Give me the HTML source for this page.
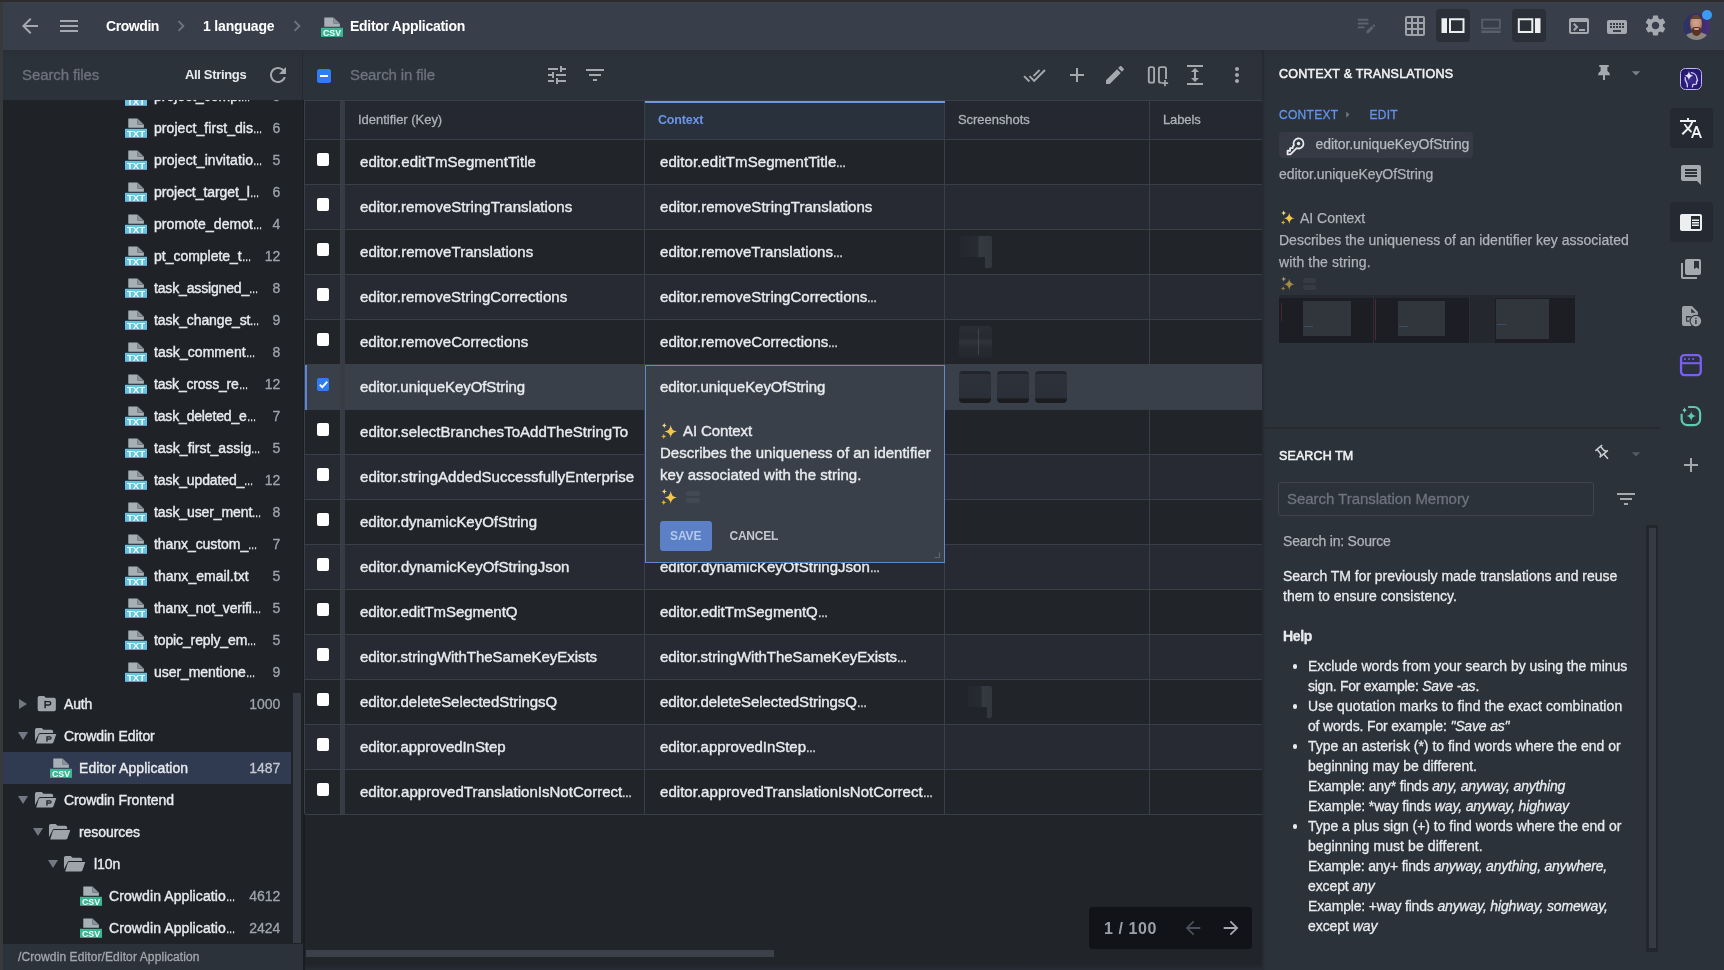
<!DOCTYPE html>
<html lang="en"><head><meta charset="utf-8"><title>Editor Application - Crowdin</title>
<style>
html,body{margin:0;padding:0}
body{width:1724px;height:970px;overflow:hidden;position:relative;background:#2d2b2b;font-family:"Liberation Sans",sans-serif;color:#e6e8eb;font-size:15px}
#root{position:absolute;left:0;top:0;width:1724px;height:970px;overflow:hidden;will-change:transform}
.ab{position:absolute;display:block}
.t,.cell,.sbt,.sbn,.help{position:absolute;white-space:nowrap;line-height:20px}
.b{font-weight:bold}
.el{display:inline-block;width:.66em;transform:scaleX(.66);transform-origin:0 50%;letter-spacing:0}
#leftedge{left:0;top:2px;width:3px;height:968px;background:#37393a}
#topbar{left:3px;top:2px;width:1721px;height:48px;background:#393f4a}
#bar2{left:3px;top:50px;width:1721px;height:50px;background:linear-gradient(180deg,#292e36 0,#2c323a 8px,#2c323a 100%)}
#sidebar{left:3px;top:100px;width:299.8px;height:844px;background:#1f2227;overflow:hidden}
#sbfoot{left:3px;top:944px;width:299.8px;height:26px;background:#2c323a}
#gap{left:302.8px;top:100px;width:2.2px;height:870px;background:#1a1c20}
#main{left:305px;top:100px;width:957px;height:870px;background:#212429;overflow:hidden}
#rpanel{left:1262px;top:100px;width:462px;height:870px;background:#2c323a}
.row{position:absolute;left:0;width:957px;height:45px}
.hl{position:absolute;left:0;width:957px;height:1px;background:#3a3e47}
.vl{position:absolute;top:0;width:1px;height:714px;background:#3a3e47}
.cb{position:absolute;left:12.3px;width:12px;height:12.6px;background:#fff;border-radius:2px;margin-top:.2px}
.cell{font-size:15px;color:#e8eaed;-webkit-text-stroke:.4px}
.sbt{font-size:14px;color:#e8eaed;-webkit-text-stroke:.4px}
.sbn{font-size:14px;color:#9ea3ab;text-align:right;-webkit-text-stroke:.3px}
.help{font-size:14px;color:#e8eaed;-webkit-text-stroke:.3px}
.g{color:#aeb3ba;font-size:14px;-webkit-text-stroke:.25px}
i{font-style:italic}
</style></head><body><div id="root">

<div class="ab" id="leftedge"></div>
<div class="ab" id="topbar"></div>
<div class="ab" id="bar2"></div>
<div class="ab" style="left:302px;top:50px;width:1px;height:50px;background:#252930"></div>
<svg class="ab" style="left:18px;top:14px;" width="24" height="24" viewBox="0 0 24 24" fill="#a4a9b0"><path d="M20 11H7.83l5.59-5.59L12 4l-8 8 8 8 1.41-1.41L7.83 13H20v-2z"/></svg>
<svg class="ab" style="left:57px;top:14px;" width="24" height="24" viewBox="0 0 24 24" fill="#a4a9b0"><path d="M3 18h18v-2H3v2zm0-5h18v-2H3v2zm0-7v2h18V6H3z"/></svg>
<div class="t b" id="t1" style="left:106px;top:16px;letter-spacing:-0.429px;font-size:14px;color:#fff">Crowdin</div>
<svg class="ab" style="left:170px;top:15px;" width="22" height="22" viewBox="0 0 24 24" fill="#6f7682"><path d="M10 6L8.59 7.41 13.17 12l-4.58 4.59L10 18l6-6z"/></svg>
<div class="t b" id="t2" style="left:203px;top:16px;letter-spacing:-0.164px;font-size:14px;color:#fff">1 language</div>
<svg class="ab" style="left:286px;top:15px;" width="22" height="22" viewBox="0 0 24 24" fill="#6f7682"><path d="M10 6L8.59 7.41 13.17 12l-4.58 4.59L10 18l6-6z"/></svg>
<svg class="ab" style="left:321px;top:17px" width="22" height="20" viewBox="0 0 22 20"><path d="M3.3 .4H12.6V6.5H18.9V9.7H3.3z" fill="#a8b0b7"/><path d="M12.6 .4L18.9 6.5H12.6z" fill="#8a9299"/><rect x="0" y="10.8" width="22" height="9" fill="#3db793"/><text x="11" y="18.7" text-anchor="middle" font-family="Liberation Sans, sans-serif" font-size="8.5" font-weight="bold" fill="#f4fbfd" textLength="18" lengthAdjust="spacingAndGlyphs">CSV</text></svg>
<div class="t b" id="t3" style="left:350px;top:16px;letter-spacing:-0.28px;font-size:14px;color:#fff">Editor Application</div>
<svg class="ab" style="left:1354.5px;top:13.3px;" width="23" height="23" viewBox="0 0 24 24" fill="#5d636e"><path d="M3 10h11v2H3v-2zm0-2h11V6H3v2zm0 8h7v-2H3v2zm15.01-3.13l.71-.71c.39-.39 1.02-.39 1.41 0l.71.71c.39.39.39 1.02 0 1.41l-.71.71-2.12-2.12zm-.71.71l-5.3 5.3V21h2.12l5.3-5.3-2.12-2.12z"/></svg>
<svg class="ab" style="left:1403px;top:14px;" width="24" height="24" viewBox="0 0 24 24" fill="#9da2a9"><path d="M20 2H4c-1.1 0-2 .9-2 2v16c0 1.1.9 2 2 2h16c1.1 0 2-.9 2-2V4c0-1.1-.9-2-2-2zM8 20H4v-4h4v4zm0-6H4v-4h4v4zm0-6H4V4h4v4zm6 12h-4v-4h4v4zm0-6h-4v-4h4v4zm0-6h-4V4h4v4zm6 12h-4v-4h4v4zm0-6h-4v-4h4v4zm0-6h-4V4h4v4z"/></svg>
<div class="ab" style="left:1436px;top:9px;width:34px;height:33px;border-radius:4px;background:#2a2f38"></div>
<svg class="ab" style="left:1441px;top:18px" width="24" height="16" viewBox="0 0 24 16" fill="#eceef0"><path d="M.5 .3h5.5v14.8H.5zM8 .3h15.5v14.8H8zM10 2.3v10.8h11.5V2.3z" fill-rule="evenodd"/></svg>
<svg class="ab" style="left:1481px;top:18px" width="20" height="16" viewBox="0 0 20 16" fill="#5a606b"><path d="M.3 .7h19.4v10.5H.3zM2 2.4v7.1h16V2.4zM.3 12.4h19.4v2.7H.3z" fill-rule="evenodd"/></svg>
<div class="ab" style="left:1512px;top:9px;width:34px;height:33px;border-radius:4px;background:#2a2f38"></div>
<svg class="ab" style="left:1517px;top:18px" width="24" height="16" viewBox="0 0 24 16" fill="#eceef0"><path d="M18 .3h5.5v14.8H18zM.8 .3h15.5v14.8H.8zM2.8 2.3v10.8h11.5V2.3z" fill-rule="evenodd"/></svg>
<svg class="ab" style="left:1567px;top:14.3px;" width="24" height="24" viewBox="0 0 24 24" fill="#a4a9b0"><path d="M20 4H4c-1.11 0-2 .9-2 2v12c0 1.1.89 2 2 2h16c1.1 0 2-.9 2-2V6c0-1.1-.89-2-2-2zm0 14H4V8h16v10zm-2-1h-6v-2h6v2zM7.5 17l-1.41-1.41L8.67 13l-2.59-2.59L7.5 9l4 4-4 4z"/></svg>
<svg class="ab" style="left:1605px;top:14.5px;" width="24" height="24" viewBox="0 0 24 24" fill="#a4a9b0"><path d="M20 5H4c-1.1 0-1.99.9-1.99 2L2 17c0 1.1.9 2 2 2h16c1.1 0 2-.9 2-2V7c0-1.1-.9-2-2-2zm-9 3h2v2h-2V8zm0 3h2v2h-2v-2zM8 8h2v2H8V8zm0 3h2v2H8v-2zm-1 2H5v-2h2v2zm0-3H5V8h2v2zm9 7H8v-2h8v2zm0-4h-2v-2h2v2zm0-3h-2V8h2v2zm3 3h-2v-2h2v2zm0-3h-2V8h2v2z"/></svg>
<svg class="ab" style="left:1642.5px;top:13.3px;" width="25" height="25" viewBox="0 0 24 24" fill="#a4a9b0"><path d="M19.14 12.94c.04-.3.06-.61.06-.94 0-.32-.02-.64-.07-.94l2.03-1.58c.18-.14.23-.41.12-.61l-1.92-3.32c-.12-.22-.37-.29-.59-.22l-2.39.96c-.5-.38-1.03-.7-1.62-.94l-.36-2.54c-.04-.24-.24-.41-.48-.41h-3.84c-.24 0-.43.17-.47.41l-.36 2.54c-.59.24-1.13.57-1.62.94l-2.39-.96c-.22-.08-.47 0-.59.22L2.74 8.87c-.12.21-.08.47.12.61l2.03 1.58c-.05.3-.09.63-.09.94s.02.64.07.94l-2.03 1.58c-.18.14-.23.41-.12.61l1.92 3.32c.12.22.37.29.59.22l2.39-.96c.5.38 1.03.7 1.62.94l.36 2.54c.05.24.24.41.48.41h3.84c.24 0 .44-.17.47-.41l.36-2.54c.59-.24 1.13-.56 1.62-.94l2.39.96c.22.08.47 0 .59-.22l1.92-3.32c.12-.22.07-.47-.12-.61l-2.01-1.58zM12 15.6c-1.98 0-3.6-1.62-3.6-3.6s1.62-3.6 3.6-3.6 3.6 1.62 3.6 3.6-1.62 3.6-3.6 3.6z"/></svg>
<div class="ab" style="left:1682.5px;top:12.5px;width:27.5px;height:27.5px;border-radius:50%;overflow:hidden;background:linear-gradient(90deg,#2c3462 0,#333068 50%,#4a2e7a 100%)"><div class="ab" style="left:1px;top:19.5px;width:25px;height:14px;border-radius:50% 50% 0 0;background:#8b877f"></div><div class="ab" style="left:7.8px;top:2.8px;width:11.8px;height:17px;border-radius:46%;background:radial-gradient(ellipse at 50% 45%,#d3a48d 0,#c4917a 50%,#8a5a45 80%,#5a3626 100%)"></div><div class="ab" style="left:8.8px;top:2.5px;width:10px;height:4px;border-radius:50% 50% 0 0;background:#4a3026;opacity:.8"></div><div class="ab" style="left:9.3px;top:14.2px;width:9px;height:9.5px;border-radius:35% 35% 50% 50%;background:#5a3222"></div><div class="ab" style="left:11.8px;top:15.3px;width:4.5px;height:2px;border-radius:1px;background:#c9a090"></div></div>
<div class="ab" style="left:1701.9px;top:9.7px;width:10.4px;height:10.4px;border-radius:50%;background:#3a9cf6"></div>
<div class="t" id="t4" style="left:22px;top:65px;letter-spacing:-0.098px;font-size:15px;color:#6d737e;-webkit-text-stroke:.3px">Search files</div>
<div class="t b" id="t5" style="left:185px;top:65px;letter-spacing:-0.338px;font-size:13px;color:#e8eaed">All Strings</div>
<svg class="ab" style="left:266px;top:63px;" width="24" height="24" viewBox="0 0 24 24" fill="#a4a9b0"><path d="M17.65 6.35C16.2 4.9 14.21 4 12 4c-4.42 0-7.99 3.58-7.99 8s3.57 8 7.99 8c3.73 0 6.84-2.55 7.73-6h-2.08c-.82 2.33-3.04 4-5.65 4-3.31 0-6-2.69-6-6s2.69-6 6-6c1.66 0 3.14.69 4.22 1.78L13 11h7V4l-2.35 2.35z"/></svg>
<div class="ab" style="left:317px;top:69px;width:13.5px;height:13.5px;border-radius:2.5px;background:#2f7cf6"></div><div class="ab" style="left:320px;top:74.5px;width:7.5px;height:2px;background:#fff"></div>
<div class="t" id="t6" style="left:350px;top:65px;letter-spacing:-0.123px;font-size:15px;color:#6d737e;-webkit-text-stroke:.3px">Search in file</div>
<svg class="ab" style="left:545px;top:63px;" width="24" height="24" viewBox="0 0 24 24" fill="#a4a9b0"><path d="M3 17v2h6v-2H3zM3 5v2h10V5H3zm10 16v-2h8v-2h-8v-2h-2v6h2zM7 9v2H3v2h4v2h2V9H7zm14 4v-2H11v2h10zm-6-4h2V7h4V5h-4V3h-2v6z"/></svg>
<svg class="ab" style="left:583px;top:63px;" width="24" height="24" viewBox="0 0 24 24" fill="#a4a9b0"><path d="M10 18h4v-2h-4v2zM3 6v2h18V6H3zm3 7h12v-2H6v2z"/></svg>
<svg class="ab" style="left:1023px;top:63.5px;" width="23" height="23" viewBox="0 0 24 24" fill="#a4a9b0"><path d="M18 7l-1.41-1.41-6.34 6.34 1.41 1.41L18 7zm4.24-1.41L11.66 16.17 7.48 12l-1.41 1.41L11.66 19l12-12-1.42-1.41zM.41 13.41L6 19l1.41-1.41L1.83 12 .41 13.41z"/></svg>
<svg class="ab" style="left:1065px;top:63px;" width="24" height="24" viewBox="0 0 24 24" fill="#a4a9b0"><path d="M19 13h-6v6h-2v-6H5v-2h6V5h2v6h6v2z"/></svg>
<svg class="ab" style="left:1103px;top:63px;" width="24" height="24" viewBox="0 0 24 24" fill="#a4a9b0"><path d="M3 17.25V21h3.75L17.81 9.94l-3.75-3.75L3 17.25zM20.71 7.04c.39-.39.39-1.02 0-1.41l-2.34-2.34c-.39-.39-1.02-.39-1.41 0l-1.83 1.83 3.75 3.75 1.83-1.83z"/></svg>
<svg class="ab" style="left:1145px;top:63px" width="26" height="26" viewBox="0 0 26 26" fill="none" stroke="#a4a9b0" stroke-width="1.9"><rect x="3.8" y="4.1" width="5.3" height="15.5" rx="1.6"/><path d="M21 16V5.7a1.6 1.6 0 0 0-1.6-1.6h-3.9a1.6 1.6 0 0 0-1.6 1.6V18a1.6 1.6 0 0 0 1.6 1.6h1.3"/><path d="M20 17v6.2M16.9 20.1h6.2" stroke-width="1.7"/></svg>
<svg class="ab" style="left:1183px;top:63px;" width="24" height="24" viewBox="0 0 24 24" fill="#a4a9b0"><path d="M4 20h16v2H4zM4 2h16v2H4zm9 7h3l-4-4-4 4h3v6H8l4 4 4-4h-3z"/></svg>
<svg class="ab" style="left:1225px;top:63px;" width="24" height="24" viewBox="0 0 24 24" fill="#a4a9b0"><path d="M12 8c1.1 0 2-.9 2-2s-.9-2-2-2-2 .9-2 2 .9 2 2 2zm0 2c-1.1 0-2 .9-2 2s.9 2 2 2 2-.9 2-2-.9-2-2-2zm0 6c-1.1 0-2 .9-2 2s.9 2 2 2 2-.9 2-2-.9-2-2-2z"/></svg>
<div class="ab" id="sidebar">
<svg class="ab" style="left:122px;top:-14px" width="22" height="20" viewBox="0 0 22 20"><path d="M3.3 .4H12.6V6.5H18.9V9.7H3.3z" fill="#a8b0b7"/><path d="M12.6 .4L18.9 6.5H12.6z" fill="#8a9299"/><rect x="0" y="10.8" width="22" height="9" fill="#6ac2e2"/><text x="11" y="18.7" text-anchor="middle" font-family="Liberation Sans, sans-serif" font-size="8.5" font-weight="bold" fill="#f4fbfd" textLength="18" lengthAdjust="spacingAndGlyphs">TXT</text></svg>
<div class="sbt" id="t7" style="left:151px;top:-14px;">project_compl<span class="el">…</span></div>
<div class="sbn" id="t8" style="right:22.5px;top:-14px;">5</div>
<svg class="ab" style="left:122px;top:18px" width="22" height="20" viewBox="0 0 22 20"><path d="M3.3 .4H12.6V6.5H18.9V9.7H3.3z" fill="#a8b0b7"/><path d="M12.6 .4L18.9 6.5H12.6z" fill="#8a9299"/><rect x="0" y="10.8" width="22" height="9" fill="#6ac2e2"/><text x="11" y="18.7" text-anchor="middle" font-family="Liberation Sans, sans-serif" font-size="8.5" font-weight="bold" fill="#f4fbfd" textLength="18" lengthAdjust="spacingAndGlyphs">TXT</text></svg>
<div class="sbt" id="t9" style="left:151px;top:18px;letter-spacing:0.062px;">project_first_dis<span class="el">…</span></div>
<div class="sbn" id="t10" style="right:22.5px;top:18px;">6</div>
<svg class="ab" style="left:122px;top:50px" width="22" height="20" viewBox="0 0 22 20"><path d="M3.3 .4H12.6V6.5H18.9V9.7H3.3z" fill="#a8b0b7"/><path d="M12.6 .4L18.9 6.5H12.6z" fill="#8a9299"/><rect x="0" y="10.8" width="22" height="9" fill="#6ac2e2"/><text x="11" y="18.7" text-anchor="middle" font-family="Liberation Sans, sans-serif" font-size="8.5" font-weight="bold" fill="#f4fbfd" textLength="18" lengthAdjust="spacingAndGlyphs">TXT</text></svg>
<div class="sbt" id="t11" style="left:151px;top:50px;letter-spacing:0.105px;">project_invitatio<span class="el">…</span></div>
<div class="sbn" id="t12" style="right:22.5px;top:50px;">5</div>
<svg class="ab" style="left:122px;top:82px" width="22" height="20" viewBox="0 0 22 20"><path d="M3.3 .4H12.6V6.5H18.9V9.7H3.3z" fill="#a8b0b7"/><path d="M12.6 .4L18.9 6.5H12.6z" fill="#8a9299"/><rect x="0" y="10.8" width="22" height="9" fill="#6ac2e2"/><text x="11" y="18.7" text-anchor="middle" font-family="Liberation Sans, sans-serif" font-size="8.5" font-weight="bold" fill="#f4fbfd" textLength="18" lengthAdjust="spacingAndGlyphs">TXT</text></svg>
<div class="sbt" id="t13" style="left:151px;top:82px;letter-spacing:-0.05px;">project_target_l<span class="el">…</span></div>
<div class="sbn" id="t14" style="right:22.5px;top:82px;">6</div>
<svg class="ab" style="left:122px;top:114px" width="22" height="20" viewBox="0 0 22 20"><path d="M3.3 .4H12.6V6.5H18.9V9.7H3.3z" fill="#a8b0b7"/><path d="M12.6 .4L18.9 6.5H12.6z" fill="#8a9299"/><rect x="0" y="10.8" width="22" height="9" fill="#6ac2e2"/><text x="11" y="18.7" text-anchor="middle" font-family="Liberation Sans, sans-serif" font-size="8.5" font-weight="bold" fill="#f4fbfd" textLength="18" lengthAdjust="spacingAndGlyphs">TXT</text></svg>
<div class="sbt" id="t15" style="left:151px;top:114px;letter-spacing:0.079px;">promote_demot<span class="el">…</span></div>
<div class="sbn" id="t16" style="right:22.5px;top:114px;">4</div>
<svg class="ab" style="left:122px;top:146px" width="22" height="20" viewBox="0 0 22 20"><path d="M3.3 .4H12.6V6.5H18.9V9.7H3.3z" fill="#a8b0b7"/><path d="M12.6 .4L18.9 6.5H12.6z" fill="#8a9299"/><rect x="0" y="10.8" width="22" height="9" fill="#6ac2e2"/><text x="11" y="18.7" text-anchor="middle" font-family="Liberation Sans, sans-serif" font-size="8.5" font-weight="bold" fill="#f4fbfd" textLength="18" lengthAdjust="spacingAndGlyphs">TXT</text></svg>
<div class="sbt" id="t17" style="left:151px;top:146px;letter-spacing:-0.021px;">pt_complete_t<span class="el">…</span></div>
<div class="sbn" id="t18" style="right:22.5px;top:146px;">12</div>
<svg class="ab" style="left:122px;top:178px" width="22" height="20" viewBox="0 0 22 20"><path d="M3.3 .4H12.6V6.5H18.9V9.7H3.3z" fill="#a8b0b7"/><path d="M12.6 .4L18.9 6.5H12.6z" fill="#8a9299"/><rect x="0" y="10.8" width="22" height="9" fill="#6ac2e2"/><text x="11" y="18.7" text-anchor="middle" font-family="Liberation Sans, sans-serif" font-size="8.5" font-weight="bold" fill="#f4fbfd" textLength="18" lengthAdjust="spacingAndGlyphs">TXT</text></svg>
<div class="sbt" id="t19" style="left:151px;top:178px;letter-spacing:-0.155px;">task_assigned_<span class="el">…</span></div>
<div class="sbn" id="t20" style="right:22.5px;top:178px;">8</div>
<svg class="ab" style="left:122px;top:210px" width="22" height="20" viewBox="0 0 22 20"><path d="M3.3 .4H12.6V6.5H18.9V9.7H3.3z" fill="#a8b0b7"/><path d="M12.6 .4L18.9 6.5H12.6z" fill="#8a9299"/><rect x="0" y="10.8" width="22" height="9" fill="#6ac2e2"/><text x="11" y="18.7" text-anchor="middle" font-family="Liberation Sans, sans-serif" font-size="8.5" font-weight="bold" fill="#f4fbfd" textLength="18" lengthAdjust="spacingAndGlyphs">TXT</text></svg>
<div class="sbt" id="t21" style="left:151px;top:210px;letter-spacing:-0.121px;">task_change_st<span class="el">…</span></div>
<div class="sbn" id="t22" style="right:22.5px;top:210px;">9</div>
<svg class="ab" style="left:122px;top:242px" width="22" height="20" viewBox="0 0 22 20"><path d="M3.3 .4H12.6V6.5H18.9V9.7H3.3z" fill="#a8b0b7"/><path d="M12.6 .4L18.9 6.5H12.6z" fill="#8a9299"/><rect x="0" y="10.8" width="22" height="9" fill="#6ac2e2"/><text x="11" y="18.7" text-anchor="middle" font-family="Liberation Sans, sans-serif" font-size="8.5" font-weight="bold" fill="#f4fbfd" textLength="18" lengthAdjust="spacingAndGlyphs">TXT</text></svg>
<div class="sbt" id="t23" style="left:151px;top:242px;letter-spacing:0.055px;">task_comment<span class="el">…</span></div>
<div class="sbn" id="t24" style="right:22.5px;top:242px;">8</div>
<svg class="ab" style="left:122px;top:274px" width="22" height="20" viewBox="0 0 22 20"><path d="M3.3 .4H12.6V6.5H18.9V9.7H3.3z" fill="#a8b0b7"/><path d="M12.6 .4L18.9 6.5H12.6z" fill="#8a9299"/><rect x="0" y="10.8" width="22" height="9" fill="#6ac2e2"/><text x="11" y="18.7" text-anchor="middle" font-family="Liberation Sans, sans-serif" font-size="8.5" font-weight="bold" fill="#f4fbfd" textLength="18" lengthAdjust="spacingAndGlyphs">TXT</text></svg>
<div class="sbt" id="t25" style="left:151px;top:274px;letter-spacing:-0.192px;">task_cross_re<span class="el">…</span></div>
<div class="sbn" id="t26" style="right:22.5px;top:274px;">12</div>
<svg class="ab" style="left:122px;top:306px" width="22" height="20" viewBox="0 0 22 20"><path d="M3.3 .4H12.6V6.5H18.9V9.7H3.3z" fill="#a8b0b7"/><path d="M12.6 .4L18.9 6.5H12.6z" fill="#8a9299"/><rect x="0" y="10.8" width="22" height="9" fill="#6ac2e2"/><text x="11" y="18.7" text-anchor="middle" font-family="Liberation Sans, sans-serif" font-size="8.5" font-weight="bold" fill="#f4fbfd" textLength="18" lengthAdjust="spacingAndGlyphs">TXT</text></svg>
<div class="sbt" id="t27" style="left:151px;top:306px;letter-spacing:-0.167px;">task_deleted_e<span class="el">…</span></div>
<div class="sbn" id="t28" style="right:22.5px;top:306px;">7</div>
<svg class="ab" style="left:122px;top:338px" width="22" height="20" viewBox="0 0 22 20"><path d="M3.3 .4H12.6V6.5H18.9V9.7H3.3z" fill="#a8b0b7"/><path d="M12.6 .4L18.9 6.5H12.6z" fill="#8a9299"/><rect x="0" y="10.8" width="22" height="9" fill="#6ac2e2"/><text x="11" y="18.7" text-anchor="middle" font-family="Liberation Sans, sans-serif" font-size="8.5" font-weight="bold" fill="#f4fbfd" textLength="18" lengthAdjust="spacingAndGlyphs">TXT</text></svg>
<div class="sbt" id="t29" style="left:151px;top:338px;letter-spacing:0.046px;">task_first_assig<span class="el">…</span></div>
<div class="sbn" id="t30" style="right:22.5px;top:338px;">5</div>
<svg class="ab" style="left:122px;top:370px" width="22" height="20" viewBox="0 0 22 20"><path d="M3.3 .4H12.6V6.5H18.9V9.7H3.3z" fill="#a8b0b7"/><path d="M12.6 .4L18.9 6.5H12.6z" fill="#8a9299"/><rect x="0" y="10.8" width="22" height="9" fill="#6ac2e2"/><text x="11" y="18.7" text-anchor="middle" font-family="Liberation Sans, sans-serif" font-size="8.5" font-weight="bold" fill="#f4fbfd" textLength="18" lengthAdjust="spacingAndGlyphs">TXT</text></svg>
<div class="sbt" id="t31" style="left:151px;top:370px;letter-spacing:-0.121px;">task_updated_<span class="el">…</span></div>
<div class="sbn" id="t32" style="right:22.5px;top:370px;">12</div>
<svg class="ab" style="left:122px;top:402px" width="22" height="20" viewBox="0 0 22 20"><path d="M3.3 .4H12.6V6.5H18.9V9.7H3.3z" fill="#a8b0b7"/><path d="M12.6 .4L18.9 6.5H12.6z" fill="#8a9299"/><rect x="0" y="10.8" width="22" height="9" fill="#6ac2e2"/><text x="11" y="18.7" text-anchor="middle" font-family="Liberation Sans, sans-serif" font-size="8.5" font-weight="bold" fill="#f4fbfd" textLength="18" lengthAdjust="spacingAndGlyphs">TXT</text></svg>
<div class="sbt" id="t33" style="left:151px;top:402px;letter-spacing:-0.096px;">task_user_ment<span class="el">…</span></div>
<div class="sbn" id="t34" style="right:22.5px;top:402px;">8</div>
<svg class="ab" style="left:122px;top:434px" width="22" height="20" viewBox="0 0 22 20"><path d="M3.3 .4H12.6V6.5H18.9V9.7H3.3z" fill="#a8b0b7"/><path d="M12.6 .4L18.9 6.5H12.6z" fill="#8a9299"/><rect x="0" y="10.8" width="22" height="9" fill="#6ac2e2"/><text x="11" y="18.7" text-anchor="middle" font-family="Liberation Sans, sans-serif" font-size="8.5" font-weight="bold" fill="#f4fbfd" textLength="18" lengthAdjust="spacingAndGlyphs">TXT</text></svg>
<div class="sbt" id="t35" style="left:151px;top:434px;letter-spacing:-0.063px;">thanx_custom_<span class="el">…</span></div>
<div class="sbn" id="t36" style="right:22.5px;top:434px;">7</div>
<svg class="ab" style="left:122px;top:466px" width="22" height="20" viewBox="0 0 22 20"><path d="M3.3 .4H12.6V6.5H18.9V9.7H3.3z" fill="#a8b0b7"/><path d="M12.6 .4L18.9 6.5H12.6z" fill="#8a9299"/><rect x="0" y="10.8" width="22" height="9" fill="#6ac2e2"/><text x="11" y="18.7" text-anchor="middle" font-family="Liberation Sans, sans-serif" font-size="8.5" font-weight="bold" fill="#f4fbfd" textLength="18" lengthAdjust="spacingAndGlyphs">TXT</text></svg>
<div class="sbt" id="t37" style="left:151px;top:466px;letter-spacing:0.029px;">thanx_email.txt</div>
<div class="sbn" id="t38" style="right:22.5px;top:466px;">5</div>
<svg class="ab" style="left:122px;top:498px" width="22" height="20" viewBox="0 0 22 20"><path d="M3.3 .4H12.6V6.5H18.9V9.7H3.3z" fill="#a8b0b7"/><path d="M12.6 .4L18.9 6.5H12.6z" fill="#8a9299"/><rect x="0" y="10.8" width="22" height="9" fill="#6ac2e2"/><text x="11" y="18.7" text-anchor="middle" font-family="Liberation Sans, sans-serif" font-size="8.5" font-weight="bold" fill="#f4fbfd" textLength="18" lengthAdjust="spacingAndGlyphs">TXT</text></svg>
<div class="sbt" id="t39" style="left:151px;top:498px;letter-spacing:-0.058px;">thanx_not_verifi<span class="el">…</span></div>
<div class="sbn" id="t40" style="right:22.5px;top:498px;">5</div>
<svg class="ab" style="left:122px;top:530px" width="22" height="20" viewBox="0 0 22 20"><path d="M3.3 .4H12.6V6.5H18.9V9.7H3.3z" fill="#a8b0b7"/><path d="M12.6 .4L18.9 6.5H12.6z" fill="#8a9299"/><rect x="0" y="10.8" width="22" height="9" fill="#6ac2e2"/><text x="11" y="18.7" text-anchor="middle" font-family="Liberation Sans, sans-serif" font-size="8.5" font-weight="bold" fill="#f4fbfd" textLength="18" lengthAdjust="spacingAndGlyphs">TXT</text></svg>
<div class="sbt" id="t41" style="left:151px;top:530px;letter-spacing:-0.125px;">topic_reply_em<span class="el">…</span></div>
<div class="sbn" id="t42" style="right:22.5px;top:530px;">5</div>
<svg class="ab" style="left:122px;top:562px" width="22" height="20" viewBox="0 0 22 20"><path d="M3.3 .4H12.6V6.5H18.9V9.7H3.3z" fill="#a8b0b7"/><path d="M12.6 .4L18.9 6.5H12.6z" fill="#8a9299"/><rect x="0" y="10.8" width="22" height="9" fill="#6ac2e2"/><text x="11" y="18.7" text-anchor="middle" font-family="Liberation Sans, sans-serif" font-size="8.5" font-weight="bold" fill="#f4fbfd" textLength="18" lengthAdjust="spacingAndGlyphs">TXT</text></svg>
<div class="sbt" id="t43" style="left:151px;top:562px;letter-spacing:-0.061px;">user_mentione<span class="el">…</span></div>
<div class="sbn" id="t44" style="right:22.5px;top:562px;">9</div>
<div class="ab" style="left:0;top:652px;width:288px;height:32px;background:#303a50"></div>
<svg class="ab" style="left:16px;top:599px" width="8" height="10" viewBox="0 0 8 10"><path d="M0 0v10L8 5z" fill="#737984"/></svg>
<svg class="ab" style="left:32.7px;top:594.8px" width="21.5" height="18.2" viewBox="0 0 22 20"><path d="M1 3a2 2 0 0 1 2-2h5l2 2h9a2 2 0 0 1 2 2v11a2 2 0 0 1-2 2H3a2 2 0 0 1-2-2z" fill="#9ea4aa"/><path d="M9.2 6.3v8.4M9.2 7.3h4.3a1.8 1.8 0 0 1 0 3.6H9.2" stroke="#1f2227" stroke-width="1.6" fill="none"/></svg>
<div class="sbt" id="t45" style="left:61px;top:594px;letter-spacing:-0.153px;">Auth</div>
<div class="sbn" id="t46" style="right:22.5px;top:594px;">1000</div>
<svg class="ab" style="left:15px;top:632px" width="10" height="8" viewBox="0 0 10 8"><path d="M0 0h10L5 8z" fill="#737984"/></svg>
<svg class="ab" style="left:31px;top:627px" width="23" height="18.3" viewBox="0 0 24 20" preserveAspectRatio="none"><path d="M1 15.5V3a2 2 0 0 1 2-2h5l2 2h8a2 2 0 0 1 2 2v1.5H6.8a2.2 2.2 0 0 0-2.1 1.5z" fill="#9ea4aa"/><path d="M6.8 7.7H23.3l-3 9a2 2 0 0 1-1.9 1.3H2.3l2.6-8.9a2 2 0 0 1 1.9-1.4z" fill="#9ea4aa"/><path d="M13.5 10v6M13.5 10.7h3a1.3 1.3 0 0 1 0 2.6h-3" stroke="#1f2227" stroke-width="1.3" fill="none"/></svg>
<div class="sbt" id="t47" style="left:61px;top:626px;letter-spacing:-0.081px;">Crowdin Editor</div>
<svg class="ab" style="left:47px;top:658px" width="22" height="20" viewBox="0 0 22 20"><path d="M3.3 .4H12.6V6.5H18.9V9.7H3.3z" fill="#a8b0b7"/><path d="M12.6 .4L18.9 6.5H12.6z" fill="#8a9299"/><rect x="0" y="10.8" width="22" height="9" fill="#3db793"/><text x="11" y="18.7" text-anchor="middle" font-family="Liberation Sans, sans-serif" font-size="8.5" font-weight="bold" fill="#f4fbfd" textLength="18" lengthAdjust="spacingAndGlyphs">CSV</text></svg>
<div class="sbt" id="t48" style="left:76px;top:658px;letter-spacing:0.056px;">Editor Application</div>
<div class="sbn" id="t49" style="right:22.5px;top:658px;color:#c3c8cf">1487</div>
<svg class="ab" style="left:15px;top:696px" width="10" height="8" viewBox="0 0 10 8"><path d="M0 0h10L5 8z" fill="#737984"/></svg>
<svg class="ab" style="left:31px;top:691px" width="23" height="18.3" viewBox="0 0 24 20" preserveAspectRatio="none"><path d="M1 15.5V3a2 2 0 0 1 2-2h5l2 2h8a2 2 0 0 1 2 2v1.5H6.8a2.2 2.2 0 0 0-2.1 1.5z" fill="#9ea4aa"/><path d="M6.8 7.7H23.3l-3 9a2 2 0 0 1-1.9 1.3H2.3l2.6-8.9a2 2 0 0 1 1.9-1.4z" fill="#9ea4aa"/><path d="M13.5 10v6M13.5 10.7h3a1.3 1.3 0 0 1 0 2.6h-3" stroke="#1f2227" stroke-width="1.3" fill="none"/></svg>
<div class="sbt" id="t50" style="left:61px;top:690px;letter-spacing:-0.086px;">Crowdin Frontend</div>
<svg class="ab" style="left:30px;top:728px" width="10" height="8" viewBox="0 0 10 8"><path d="M0 0h10L5 8z" fill="#737984"/></svg>
<svg class="ab" style="left:45.3px;top:723px" width="23" height="18.3" viewBox="0 0 24 20" preserveAspectRatio="none"><path d="M1 15.5V3a2 2 0 0 1 2-2h5l2 2h8a2 2 0 0 1 2 2v1.5H6.8a2.2 2.2 0 0 0-2.1 1.5z" fill="#9ea4aa"/><path d="M6.8 7.7H23.3l-3 9a2 2 0 0 1-1.9 1.3H2.3l2.6-8.9a2 2 0 0 1 1.9-1.4z" fill="#9ea4aa"/></svg>
<div class="sbt" id="t51" style="left:76px;top:722px;letter-spacing:-0.052px;">resources</div>
<svg class="ab" style="left:45px;top:760px" width="10" height="8" viewBox="0 0 10 8"><path d="M0 0h10L5 8z" fill="#737984"/></svg>
<svg class="ab" style="left:60.3px;top:755px" width="23" height="18.3" viewBox="0 0 24 20" preserveAspectRatio="none"><path d="M1 15.5V3a2 2 0 0 1 2-2h5l2 2h8a2 2 0 0 1 2 2v1.5H6.8a2.2 2.2 0 0 0-2.1 1.5z" fill="#9ea4aa"/><path d="M6.8 7.7H23.3l-3 9a2 2 0 0 1-1.9 1.3H2.3l2.6-8.9a2 2 0 0 1 1.9-1.4z" fill="#9ea4aa"/></svg>
<div class="sbt" id="t52" style="left:91px;top:754px;letter-spacing:-0.042px;">l10n</div>
<svg class="ab" style="left:77px;top:786px" width="22" height="20" viewBox="0 0 22 20"><path d="M3.3 .4H12.6V6.5H18.9V9.7H3.3z" fill="#a8b0b7"/><path d="M12.6 .4L18.9 6.5H12.6z" fill="#8a9299"/><rect x="0" y="10.8" width="22" height="9" fill="#3db793"/><text x="11" y="18.7" text-anchor="middle" font-family="Liberation Sans, sans-serif" font-size="8.5" font-weight="bold" fill="#f4fbfd" textLength="18" lengthAdjust="spacingAndGlyphs">CSV</text></svg>
<div class="sbt" id="t53" style="left:106px;top:786px;letter-spacing:0.094px;">Crowdin Applicatio<span class="el">…</span></div>
<div class="sbn" id="t54" style="right:22.5px;top:786px;">4612</div>
<svg class="ab" style="left:77px;top:818px" width="22" height="20" viewBox="0 0 22 20"><path d="M3.3 .4H12.6V6.5H18.9V9.7H3.3z" fill="#a8b0b7"/><path d="M12.6 .4L18.9 6.5H12.6z" fill="#8a9299"/><rect x="0" y="10.8" width="22" height="9" fill="#3db793"/><text x="11" y="18.7" text-anchor="middle" font-family="Liberation Sans, sans-serif" font-size="8.5" font-weight="bold" fill="#f4fbfd" textLength="18" lengthAdjust="spacingAndGlyphs">CSV</text></svg>
<div class="sbt" id="t55" style="left:106px;top:818px;letter-spacing:0.094px;">Crowdin Applicatio<span class="el">…</span></div>
<div class="sbn" id="t56" style="right:22.5px;top:818px;">2424</div>
<div class="ab" style="left:290.2px;top:592.6px;width:7.7px;height:250px;background:#353a43"></div>
</div>
<div class="ab" id="sbfoot"></div>
<div class="t" id="t57" style="left:18px;top:947px;letter-spacing:0.103px;font-size:12px;color:#a2a7ae;-webkit-text-stroke:.3px">/Crowdin Editor/Editor Application</div>
<div class="ab" id="gap"></div>
<div class="ab" style="left:304.3px;top:100px;width:1px;height:714px;background:#3a3e47"></div>
<div class="ab" id="main">
<div class="row" style="top:0;height:39px;background:#252830"></div>
<div class="ab" style="left:340px;top:0;width:300px;height:39px;background:#29313d"></div>
<div class="row" style="top:39px;background:#212429"></div>
<div class="row" style="top:84px;background:#272a32"></div>
<div class="row" style="top:129px;background:#212429"></div>
<div class="row" style="top:174px;background:#272a32"></div>
<div class="row" style="top:219px;background:#212429"></div>
<div class="row" style="top:264px;background:#394049"></div>
<div class="row" style="top:309px;background:#212429"></div>
<div class="row" style="top:354px;background:#272a32"></div>
<div class="row" style="top:399px;background:#212429"></div>
<div class="row" style="top:444px;background:#272a32"></div>
<div class="row" style="top:489px;background:#212429"></div>
<div class="row" style="top:534px;background:#272a32"></div>
<div class="row" style="top:579px;background:#212429"></div>
<div class="row" style="top:624px;background:#272a32"></div>
<div class="row" style="top:669px;background:#212429"></div>
<div class="ab" style="left:35px;top:0;width:5px;height:714px;background:#373b43"></div>
<div class="hl" style="top:0px"></div>
<div class="hl" style="top:39px"></div>
<div class="hl" style="top:84px"></div>
<div class="hl" style="top:129px"></div>
<div class="hl" style="top:174px"></div>
<div class="hl" style="top:219px"></div>
<div class="hl" style="top:264px"></div>
<div class="hl" style="top:309px"></div>
<div class="hl" style="top:354px"></div>
<div class="hl" style="top:399px"></div>
<div class="hl" style="top:444px"></div>
<div class="hl" style="top:489px"></div>
<div class="hl" style="top:534px"></div>
<div class="hl" style="top:579px"></div>
<div class="hl" style="top:624px"></div>
<div class="hl" style="top:669px"></div>
<div class="hl" style="top:714px"></div>
<div class="vl" style="left:35px"></div>
<div class="vl" style="left:339px"></div>
<div class="vl" style="left:639px"></div>
<div class="vl" style="left:844px"></div>
<div class="ab" style="left:340px;top:.6px;width:300px;height:2.4px;background:#7398d6"></div>
<div class="ab" style="left:0;top:265px;width:2px;height:45px;background:#5b86d8"></div>
<div class="t" id="t58" style="left:53px;top:10px;letter-spacing:-0.022px;font-size:13px;color:#adb1b8;-webkit-text-stroke:.3px">Identifier (Key)</div>
<div class="t b" id="t59" style="left:353px;top:10px;letter-spacing:-0.204px;font-size:12.5px;color:#6b96e8">Context</div>
<div class="t" id="t60" style="left:653px;top:10px;letter-spacing:-0.051px;font-size:13px;color:#adb1b8;-webkit-text-stroke:.3px">Screenshots</div>
<div class="t" id="t61" style="left:858px;top:10px;letter-spacing:-0.119px;font-size:13px;color:#adb1b8;-webkit-text-stroke:.3px">Labels</div>
<div class="cb" style="top:53px"></div>
<div class="cell" id="t62" style="left:55px;top:52px;letter-spacing:0.059px;">editor.editTmSegmentTitle</div>
<div class="cell" id="t63" style="left:355px;top:52px;letter-spacing:0.072px;">editor.editTmSegmentTitle<span class="el">…</span></div>
<div class="cb" style="top:98px"></div>
<div class="cell" id="t64" style="left:55px;top:97px;letter-spacing:0.032px;">editor.removeStringTranslations</div>
<div class="cell" id="t65" style="left:355px;top:97px;letter-spacing:0.038px;">editor.removeStringTranslations</div>
<div class="cb" style="top:143px"></div>
<div class="cell" id="t66" style="left:55px;top:142px;letter-spacing:0.047px;">editor.removeTranslations</div>
<div class="cell" id="t67" style="left:355px;top:142px;letter-spacing:0.038px;">editor.removeTranslations<span class="el">…</span></div>
<div class="cb" style="top:188px"></div>
<div class="cell" id="t68" style="left:55px;top:187px;letter-spacing:0.014px;">editor.removeStringCorrections</div>
<div class="cell" id="t69" style="left:355px;top:187px;letter-spacing:0.021px;">editor.removeStringCorrections<span class="el">…</span></div>
<div class="cb" style="top:233px"></div>
<div class="cell" id="t70" style="left:55px;top:232px;letter-spacing:0.026px;">editor.removeCorrections</div>
<div class="cell" id="t71" style="left:355px;top:232px;letter-spacing:0.033px;">editor.removeCorrections<span class="el">…</span></div>
<div class="cb" style="top:278px;background:#2f7cf6"></div><svg class="ab" style="left:13px;top:279px" width="11" height="11" viewBox="0 0 11 11"><path d="M1.8 5.6l2.5 2.5L9.3 2.6" stroke="#fff" stroke-width="1.9" fill="none"/></svg>
<div class="cell" id="t72" style="left:55px;top:277px;letter-spacing:-0.07px;">editor.uniqueKeyOfString</div>
<div class="cb" style="top:323px"></div>
<div class="cell" id="t73" style="left:55px;top:322px;letter-spacing:0.034px;">editor.selectBranchesToAddTheStringTo</div>
<div class="cb" style="top:368px"></div>
<div class="cell" id="t74" style="left:55px;top:367px;letter-spacing:0.036px;">editor.stringAddedSuccessfullyEnterprise</div>
<div class="cb" style="top:413px"></div>
<div class="cell" id="t75" style="left:55px;top:412px;letter-spacing:-0.024px;">editor.dynamicKeyOfString</div>
<div class="cb" style="top:458px"></div>
<div class="cell" id="t76" style="left:55px;top:457px;letter-spacing:0.004px;">editor.dynamicKeyOfStringJson</div>
<div class="cell" id="t77" style="left:355px;top:457px;letter-spacing:0.018px;">editor.dynamicKeyOfStringJson<span class="el">…</span></div>
<div class="cb" style="top:503px"></div>
<div class="cell" id="t78" style="left:55px;top:502px;letter-spacing:-0.049px;">editor.editTmSegmentQ</div>
<div class="cell" id="t79" style="left:355px;top:502px;letter-spacing:-0.032px;">editor.editTmSegmentQ<span class="el">…</span></div>
<div class="cb" style="top:548px"></div>
<div class="cell" id="t80" style="left:55px;top:547px;letter-spacing:-0.044px;">editor.stringWithTheSameKeyExists</div>
<div class="cell" id="t81" style="left:355px;top:547px;letter-spacing:-0.042px;">editor.stringWithTheSameKeyExists<span class="el">…</span></div>
<div class="cb" style="top:593px"></div>
<div class="cell" id="t82" style="left:55px;top:592px;letter-spacing:-0.044px;">editor.deleteSelectedStringsQ</div>
<div class="cell" id="t83" style="left:355px;top:592px;letter-spacing:-0.055px;">editor.deleteSelectedStringsQ<span class="el">…</span></div>
<div class="cb" style="top:638px"></div>
<div class="cell" id="t84" style="left:55px;top:637px;letter-spacing:-0.061px;">editor.approvedInStep</div>
<div class="cell" id="t85" style="left:355px;top:637px;letter-spacing:-0.04px;">editor.approvedInStep<span class="el">…</span></div>
<div class="cb" style="top:683px"></div>
<div class="cell" id="t86" style="left:55px;top:682px;letter-spacing:0.027px;">editor.approvedTranslationIsNotCorrect<span class="el">…</span></div>
<div class="cell" id="t87" style="left:355px;top:682px;letter-spacing:0.037px;">editor.approvedTranslationIsNotCorrect<span class="el">…</span></div>
<div class="ab" style="left:654.5px;top:136px;width:32px;height:32px;border-radius:2px;background:linear-gradient(90deg,rgba(52,56,64,.15) 0,rgba(52,56,64,.35) 55%,rgba(60,64,73,.75) 60%,rgba(56,60,68,.75) 100%)"></div><div class="ab" style="left:654.5px;top:136px;width:25.6px;height:12.16px;background:#21242a;transform:translateY(21.12px)"></div>
<div class="ab" style="left:654px;top:226px;width:32.5px;height:32px;border-radius:4px;background:linear-gradient(180deg,#2b2e35 0,#262930 35%,#30333a 50%,#282b32 65%,#24272d 100%)"></div><div class="ab" style="left:672.85px;top:229px;width:1.5px;height:26px;background:#4a4e57;opacity:.7"></div>
<div class="ab" style="left:653.7px;top:271px;width:32.7px;height:32px;border-radius:4px;background:linear-gradient(180deg,#22252b 0,#22252b 9%,#2d3139 10%,#2b2f37 84%,#1a1c20 88%,#1a1c20 100%)"></div>
<div class="ab" style="left:691.9px;top:271px;width:32.3px;height:32px;border-radius:4px;background:linear-gradient(180deg,#22252b 0,#22252b 9%,#2d3139 10%,#2b2f37 84%,#1a1c20 88%,#1a1c20 100%)"></div>
<div class="ab" style="left:729.7px;top:271px;width:32.1px;height:32px;border-radius:4px;background:linear-gradient(180deg,#22252b 0,#22252b 9%,#2d3139 10%,#2b2f37 84%,#1a1c20 88%,#1a1c20 100%)"></div>
<div class="ab" style="left:663px;top:586px;width:24px;height:32px;border-radius:2px;background:linear-gradient(90deg,rgba(52,56,64,.15) 0,rgba(52,56,64,.35) 55%,rgba(60,64,73,.75) 60%,rgba(56,60,68,.75) 100%)"></div><div class="ab" style="left:663px;top:586px;width:19.2px;height:12.16px;background:#21242a;transform:translateY(21.12px)"></div>
<div class="ab" style="left:340px;top:265px;width:298px;height:196px;background:#394049;border:1px solid #6287cc"></div>
<div class="cell" id="t88" style="left:355px;top:277px;letter-spacing:-0.058px;">editor.uniqueKeyOfString</div>
<svg class="ab" style="left:354.5px;top:322px;opacity:1" width="18" height="18" viewBox="0 0 16 16"><path d="M9.5 2.5Q10 8 15 8.5Q10 9 9.5 14.5Q9 9 4 8.5Q9 8 9.5 2.5z" fill="#f3c64a"/><path d="M3.8 .5Q4 3 6.3 3.2Q4 3.4 3.8 5.9Q3.6 3.4 1.3 3.2Q3.6 3 3.8 .5z" fill="#f7d98a"/><path d="M3.3 10.5Q3.5 12.6 5.5 12.8Q3.5 13 3.3 15.1Q3.1 13 1.1 12.8Q3.1 12.6 3.3 10.5z" fill="#e2ae3a"/></svg>
<div class="cell" id="t89" style="left:378px;top:321px;letter-spacing:-0.105px;">AI Context</div>
<div class="cell" id="t90" style="left:355px;top:343px;letter-spacing:-0.007px;">Describes the uniqueness of an identifier</div>
<div class="cell" id="t91" style="left:355px;top:365px;letter-spacing:0.042px;">key associated with the string.</div>
<svg class="ab" style="left:354.5px;top:388px;opacity:1" width="18" height="18" viewBox="0 0 16 16"><path d="M9.5 2.5Q10 8 15 8.5Q10 9 9.5 14.5Q9 9 4 8.5Q9 8 9.5 2.5z" fill="#f3c64a"/><path d="M3.8 .5Q4 3 6.3 3.2Q4 3.4 3.8 5.9Q3.6 3.4 1.3 3.2Q3.6 3 3.8 .5z" fill="#f7d98a"/><path d="M3.3 10.5Q3.5 12.6 5.5 12.8Q3.5 13 3.3 15.1Q3.1 13 1.1 12.8Q3.1 12.6 3.3 10.5z" fill="#e2ae3a"/></svg>
<div class="ab" style="left:381px;top:391px;width:14px;height:5px;border-radius:2px;background:#434954"></div><div class="ab" style="left:381px;top:398px;width:14px;height:5px;border-radius:2px;background:#434954"></div>
<div class="ab" style="left:355px;top:421px;width:52px;height:30px;border-radius:3px;background:#5b80c6"></div>
<div class="t b" id="t92" style="left:365px;top:426px;letter-spacing:-0.099px;font-size:12px;color:#b4c7ec">SAVE</div>
<div class="t b" id="t93" style="left:424.5px;top:426px;letter-spacing:-0.233px;font-size:12px;color:#c3c7ce">CANCEL</div>
<svg class="ab" style="left:628px;top:451px" width="8" height="8" viewBox="0 0 8 8"><path d="M6.5 1.5V6.5H1.5" stroke="#5a6170" stroke-width="1.2" fill="none"/></svg>
<div class="ab" style="left:784px;top:807px;width:162.5px;height:42px;border-radius:4px;background:#111318"></div>
<div class="t b" id="t94" style="left:799px;top:819px;letter-spacing:0.58px;font-size:16px;color:#9aa0a8">1 / 100</div>
<svg class="ab" style="left:877px;top:817px;" width="22" height="22" viewBox="0 0 24 24" fill="#4a4f59"><path d="M20 11H7.83l5.59-5.59L12 4l-8 8 8 8 1.41-1.41L7.83 13H20v-2z"/></svg>
<svg class="ab" style="left:915px;top:817px;" width="22" height="22" viewBox="0 0 24 24" fill="#a4a9b0"><path d="M12 4l-1.41 1.41L16.17 11H4v2h12.17l-5.58 5.59L12 20l8-8z"/></svg>
<div class="ab" style="left:0;top:864px;width:957px;height:6px;background:linear-gradient(180deg,#212429,#282c34)"></div>
<div class="ab" style="left:1px;top:850px;width:468px;height:7px;background:#3b4049"></div>
</div>
<div class="ab" id="rpanel"></div>
<div class="ab" style="left:1262px;top:50px;width:3px;height:920px;background:linear-gradient(90deg,rgba(0,0,0,.2),rgba(0,0,0,0))"></div>
<div class="t" id="t95" style="left:1279px;top:64px;letter-spacing:0.214px;font-size:12.5px;color:#f0f1f3;-webkit-text-stroke:.55px">CONTEXT &amp; TRANSLATIONS</div>
<svg class="ab" style="left:1597.8px;top:64.7px" width="12" height="15.5" viewBox="0 0 12 15.5" fill="#a4a9b0"><path d="M1.3 0H10.7V2H9.4V6Q12 7.5 12 10.3H7V15.5H5V10.3H0Q0 7.5 2.6 6V2H1.3z"/></svg>
<svg class="ab" style="left:1626.2px;top:62.5px;" width="20" height="20" viewBox="0 0 24 24" fill="#7a808a"><path d="M7 10l5 5 5-5z"/></svg>
<div class="t" id="t96" style="left:1279px;top:105px;letter-spacing:0.308px;font-size:12px;color:#6194ea;-webkit-text-stroke:.3px">CONTEXT</div>
<svg class="ab" style="left:1339.5px;top:106.5px;" width="15" height="15" viewBox="0 0 24 24" fill="#737984"><path d="M10 17l5-5-5-5v10z"/></svg>
<div class="t" id="t97" style="left:1369.5px;top:105px;letter-spacing:0.289px;font-size:12px;color:#6194ea;-webkit-text-stroke:.3px">EDIT</div>
<div class="ab" style="left:1279px;top:132px;width:194px;height:26px;border-radius:4px;background:#353a44"></div>
<svg class="ab" style="left:1282.7px;top:134.5px" width="24" height="24" viewBox="0 0 24 24"><g transform="rotate(135 12 12)" fill="none" stroke="#e8eaed" stroke-width="1.8" stroke-linejoin="round"><path d="M11.58 10A5 5 0 1 0 11.58 14H13L14.5 12.8L16.3 14.6L18.1 12.8L19.9 14.6L22.5 12L20.5 10z"/><circle cx="7" cy="12" r="1.7" fill="#e8eaed" stroke="none"/></g></svg>
<div class="t" id="t98" style="left:1315.5px;top:134px;letter-spacing:-0.077px;font-size:14px;color:#b5b9c0;-webkit-text-stroke:.25px">editor.uniqueKeyOfString</div>
<div class="t g" id="t99" style="left:1279px;top:164px;letter-spacing:-0.061px;">editor.uniqueKeyOfString</div>
<svg class="ab" style="left:1280px;top:210px;opacity:1" width="15.5" height="15.5" viewBox="0 0 16 16"><path d="M9.5 2.5Q10 8 15 8.5Q10 9 9.5 14.5Q9 9 4 8.5Q9 8 9.5 2.5z" fill="#f3c64a"/><path d="M3.8 .5Q4 3 6.3 3.2Q4 3.4 3.8 5.9Q3.6 3.4 1.3 3.2Q3.6 3 3.8 .5z" fill="#f7d98a"/><path d="M3.3 10.5Q3.5 12.6 5.5 12.8Q3.5 13 3.3 15.1Q3.1 13 1.1 12.8Q3.1 12.6 3.3 10.5z" fill="#e2ae3a"/></svg>
<div class="t g" id="t100" style="left:1300px;top:208px;letter-spacing:-0.017px;">AI Context</div>
<div class="t g" id="t101" style="left:1279px;top:230px;letter-spacing:0.006px;">Describes the uniqueness of an identifier key associated</div>
<div class="t g" id="t102" style="left:1279px;top:252px;letter-spacing:0.09px;">with the string.</div>
<svg class="ab" style="left:1280px;top:276px;opacity:0.6" width="15.5" height="15.5" viewBox="0 0 16 16"><path d="M9.5 2.5Q10 8 15 8.5Q10 9 9.5 14.5Q9 9 4 8.5Q9 8 9.5 2.5z" fill="#f3c64a"/><path d="M3.8 .5Q4 3 6.3 3.2Q4 3.4 3.8 5.9Q3.6 3.4 1.3 3.2Q3.6 3 3.8 .5z" fill="#f7d98a"/><path d="M3.3 10.5Q3.5 12.6 5.5 12.8Q3.5 13 3.3 15.1Q3.1 13 1.1 12.8Q3.1 12.6 3.3 10.5z" fill="#e2ae3a"/></svg>
<div class="ab" style="left:1303px;top:278px;width:13px;height:4.5px;border-radius:2px;background:#363b45"></div><div class="ab" style="left:1303px;top:285px;width:13px;height:4.5px;border-radius:2px;background:#363b45"></div>
<div class="ab" style="left:1279px;top:295px;width:296px;height:47.8px;background:#1c1e23"></div>
<div class="ab" style="left:1279px;top:295px;width:296px;height:2.5px;background:#25282e"></div>
<div class="ab" style="left:1302.5px;top:300.6px;width:48.2px;height:35.8px;background:#31353c"></div>
<div class="ab" style="left:1304px;top:325.6px;width:9px;height:1.2px;background:#4a6fa8;opacity:.45"></div>
<div class="ab" style="left:1397.7px;top:301px;width:47.3px;height:35.4px;background:#31353c"></div>
<div class="ab" style="left:1399.2px;top:326px;width:9px;height:1.2px;background:#4a6fa8;opacity:.45"></div>
<div class="ab" style="left:1495.5px;top:298.8px;width:53.3px;height:39.9px;background:#31353c"></div>
<div class="ab" style="left:1497px;top:323.8px;width:9px;height:1.2px;background:#4a6fa8;opacity:.45"></div>
<div class="ab" style="left:1469.5px;top:297.5px;width:25px;height:45px;background:#24272d"></div>
<div class="ab" style="left:1373px;top:295px;width:1.2px;height:47.8px;background:#2b2e35"></div><div class="ab" style="left:1468.8px;top:295px;width:1.2px;height:47.8px;background:#2b2e35"></div>
<div class="ab" style="left:1374.5px;top:299px;width:1.5px;height:41px;background:#5a2a33;opacity:.8"></div><div class="ab" style="left:1280.5px;top:303px;width:1.5px;height:18px;background:#5a2a33;opacity:.7"></div>
<div class="ab" style="left:1262px;top:427px;width:398px;height:2px;background:#252930"></div>
<div class="t" id="t103" style="left:1279px;top:446px;letter-spacing:0.112px;font-size:12.5px;color:#f0f1f3;-webkit-text-stroke:.55px">SEARCH TM</div>
<svg class="ab" style="left:1594.25px;top:444.25px;transform:rotate(-40deg)" width="18.5" height="18.5" viewBox="0 0 24 24" fill="#c8ccd2"><path d="M14 4v5c0 1.12.37 2.16 1 3H9c.65-.86 1-1.9 1-3V4h4m3-2H7c-.55 0-1 .45-1 1s.45 1 1 1h1v5c0 1.66-1.34 3-3 3v2h5.97v7l1 1 1-1v-7H19v-2c-1.66 0-3-1.34-3-3V4h1c.55 0 1-.45 1-1s-.45-1-1-1z"/></svg>
<svg class="ab" style="left:1625.7px;top:444px;" width="20" height="20" viewBox="0 0 24 24" fill="#555b65"><path d="M7 10l5 5 5-5z"/></svg>
<div class="ab" style="left:1278px;top:482px;width:313.5px;height:31.5px;border:1px solid #3e434d;border-radius:3px"></div>
<div class="t" id="t104" style="left:1287px;top:489px;letter-spacing:-0.044px;font-size:15px;color:#6d737e;-webkit-text-stroke:.3px">Search Translation Memory</div>
<svg class="ab" style="left:1614px;top:487.3px;" width="24" height="24" viewBox="0 0 24 24" fill="#a4a9b0"><path d="M10 18h4v-2h-4v2zM3 6v2h18V6H3zm3 7h12v-2H6v2z"/></svg>
<div class="t g" id="t105" style="left:1283px;top:531px;letter-spacing:-0.212px;">Search in: Source</div>
<div class="help" id="t106" style="left:1283px;top:566px;letter-spacing:-0.033px;">Search TM for previously made translations and reuse</div>
<div class="help" id="t107" style="left:1283px;top:586px;letter-spacing:0.027px;">them to ensure consistency.</div>
<div class="help" id="t108" style="left:1283px;top:626px;letter-spacing:-0.336px;"><b>Help</b></div>
<div class="help" id="t109" style="left:1308px;top:656px;letter-spacing:-0.028px;">Exclude words from your search by using the minus</div>
<div class="help" id="t110" style="left:1308px;top:676px;letter-spacing:-0.257px;">sign. For example: <i>Save -as</i>.</div>
<div class="help" id="t111" style="left:1308px;top:696px;letter-spacing:0.077px;">Use quotation marks to find the exact combination</div>
<div class="help" id="t112" style="left:1308px;top:716px;letter-spacing:-0.169px;">of words. For example: <i>"Save as"</i></div>
<div class="help" id="t113" style="left:1308px;top:736px;letter-spacing:-0.004px;">Type an asterisk (*) to find words where the end or</div>
<div class="help" id="t114" style="left:1308px;top:756px;letter-spacing:0.013px;">beginning may be different.</div>
<div class="help" id="t115" style="left:1308px;top:776px;letter-spacing:-0.17px;">Example: any* finds <i>any, anyway, anything</i></div>
<div class="help" id="t116" style="left:1308px;top:796px;letter-spacing:-0.157px;">Example: *way finds <i>way, anyway, highway</i></div>
<div class="help" id="t117" style="left:1308px;top:816px;letter-spacing:-0.029px;">Type a plus sign (+) to find words where the end or</div>
<div class="help" id="t118" style="left:1308px;top:836px;letter-spacing:0.081px;">beginning must be different.</div>
<div class="help" id="t119" style="left:1308px;top:856px;letter-spacing:-0.231px;">Example: any+ finds <i>anyway, anything, anywhere,</i></div>
<div class="help" id="t120" style="left:1308px;top:876px;letter-spacing:-0.102px;">except <i>any</i></div>
<div class="help" id="t121" style="left:1308px;top:896px;letter-spacing:-0.162px;">Example: +way finds <i>anyway, highway, someway,</i></div>
<div class="help" id="t122" style="left:1308px;top:916px;letter-spacing:-0.065px;">except <i>way</i></div>
<div class="ab" style="left:1292.5px;top:664px;width:4.5px;height:4.5px;border-radius:50%;background:#e8eaed"></div>
<div class="ab" style="left:1292.5px;top:704px;width:4.5px;height:4.5px;border-radius:50%;background:#e8eaed"></div>
<div class="ab" style="left:1292.5px;top:744px;width:4.5px;height:4.5px;border-radius:50%;background:#e8eaed"></div>
<div class="ab" style="left:1292.5px;top:824px;width:4.5px;height:4.5px;border-radius:50%;background:#e8eaed"></div>
<div class="ab" style="left:1645.5px;top:525px;width:12px;height:427px;background:#22262d"></div>
<div class="ab" style="left:1648.5px;top:528px;width:7.5px;height:420px;background:#363b45"></div>
<div class="ab" style="left:1680px;top:68px;width:22px;height:22px;border-radius:5.5px;background:radial-gradient(circle at 50% 55%,#3d2e93 0,#2a1e78 45%,#1b1360 100%);border:1.4px solid #c2b3fb;box-sizing:border-box"></div>
<svg class="ab" style="left:1680px;top:68px" width="22" height="22" viewBox="0 0 22 22" fill="none" stroke="#d9ccff" stroke-width="1.3" stroke-linecap="round" stroke-linejoin="round"><path d="M5.2 9.6C4.6 12 6.5 14 7.2 16L7.4 18.9M11.4 4.7C14.5 5 16.8 7.8 17 10.8L17.6 12.7L16.4 13.3L16.6 15.2C16.6 16.2 15.5 16.6 13 16.4L12.4 18.9"/><path d="M8.9 3.3Q9.4 7.3 13.4 7.8Q9.4 8.3 8.9 12.3Q8.4 8.3 4.4 7.8Q8.4 7.3 8.9 3.3z" fill="#e9e0ff" stroke="none"/></svg>
<div class="ab" style="left:1669.5px;top:108px;width:43.5px;height:40px;border-radius:4px;background:#252931"></div>
<svg class="ab" style="left:1679.2px;top:116.4px;" width="24" height="24" viewBox="0 0 24 24" fill="#f0f1f3"><path d="M12.87 15.07l-2.54-2.51.03-.03c1.74-1.94 2.98-4.17 3.71-6.53H17V4h-7V2H8v2H1v1.99h11.17C11.5 7.92 10.44 9.75 9 11.35 8.07 10.32 7.3 9.19 6.69 8h-2c.73 1.63 1.73 3.17 2.98 4.56l-5.09 5.02L4 19l5-5 3.11 3.11.76-2.04zM18.5 10h-2L12 22h2l1.12-3h4.75L21 22h2l-4.5-12zm-2.62 7l1.62-4.33L19.12 17h-3.24z"/></svg>
<svg class="ab" style="left:1679px;top:163px;" width="24" height="24" viewBox="0 0 24 24" fill="#a4a9b0"><path d="M21.99 4c0-1.1-.89-2-1.99-2H4c-1.1 0-2 .9-2 2v12c0 1.1.9 2 2 2h14l4 4-.01-18zM18 14H6v-2h12v2zm0-3H6V9h12v2zm0-3H6V6h12v2z"/></svg>
<div class="ab" style="left:1669.5px;top:202px;width:43.5px;height:40px;border-radius:4px;background:#252931"></div>
<svg class="ab" style="left:1679px;top:209.8px;" width="24" height="24" viewBox="0 0 24 24" fill="#eceef0"><path d="M13 12h7v1.5h-7zm0-2.5h7V11h-7zm0 5h7V16h-7zM21 4H3c-1.1 0-2 .9-2 2v13c0 1.1.9 2 2 2h18c1.1 0 2-.9 2-2V6c0-1.1-.9-2-2-2zm0 15h-9V6h9v13z"/></svg>
<svg class="ab" style="left:1679px;top:257px;" width="24" height="24" viewBox="0 0 24 24" fill="#a4a9b0"><path d="M4 6H2v14c0 1.1.9 2 2 2h14v-2H4V6zm16-4H8c-1.1 0-2 .9-2 2v12c0 1.1.9 2 2 2h12c1.1 0 2-.9 2-2V4c0-1.1-.9-2-2-2zm0 10l-2.5-1.5L15 12V4h5v8z"/></svg>
<svg class="ab" style="left:1680px;top:305px" width="22" height="22" viewBox="0 0 22 22" fill="#9da2a9"><path d="M4 1H12L17.9 7V19a2 2 0 0 1-2 2H4a2 2 0 0 1-2-2V3a2 2 0 0 1 2-2z"/><path d="M11.2 3.4V7.7H15.6z" fill="#2c323a"/><path d="M6.1 11H10.8V12.4H6.1zM6.1 15.4H9.3V16.8H6.1zM6.1 11H7.1V16.8H6.1z" fill="#2c323a"/><circle cx="15.9" cy="16.1" r="6.4" fill="#2c323a"/><circle cx="15.9" cy="16.1" r="5.3"/><circle cx="15.9" cy="13.5" r=".8" fill="#2c323a"/><path d="M15.2 15H16.6V19H15.2z" fill="#2c323a"/></svg>
<svg class="ab" style="left:1679px;top:353px" width="24" height="24" viewBox="0 0 24 24" fill="none" stroke="#7a60f2" stroke-width="2.3"><rect x="2.05" y="2.05" width="19.7" height="20" rx="3.3"/><path d="M2 10.2h20" stroke-width="2"/><g fill="#7a60f2" stroke="none"><circle cx="5.9" cy="6.1" r="1"/><circle cx="10" cy="6.1" r="1"/><circle cx="14.1" cy="6.1" r="1"/></g></svg>
<svg class="ab" style="left:1679px;top:405px" width="24" height="24" viewBox="0 0 24 24" fill="none" stroke="#5bcaaf" stroke-width="2.2" stroke-linecap="round"><path d="M10 2H15.1a6 6 0 0 1 6 6v6.2a6 6 0 0 1-6 6H8.6a6 6 0 0 1-6-6V9.5"/><path d="M5.5 1.9Q5.8 4.8 8.7 5.1Q5.8 5.4 5.5 8.3Q5.2 5.4 2.3 5.1Q5.2 4.8 5.5 1.9z" fill="#6fd3ba" stroke="none"/><path d="M12.2 6.3Q12.8 10.5 17 11.1Q12.8 11.7 12.2 15.9Q11.6 11.7 7.4 11.1Q11.6 10.5 12.2 6.3z" fill="#5bcaaf" stroke="none"/></svg>
<svg class="ab" style="left:1679px;top:453.3px;" width="24" height="24" viewBox="0 0 24 24" fill="#a4a9b0"><path d="M19 13h-6v6h-2v-6H5v-2h6V5h2v6h6v2z"/></svg>
<div class="ab" style="left:0;top:0;width:1724px;height:2px;background:#2d2b2b"></div>
</div></body></html>
